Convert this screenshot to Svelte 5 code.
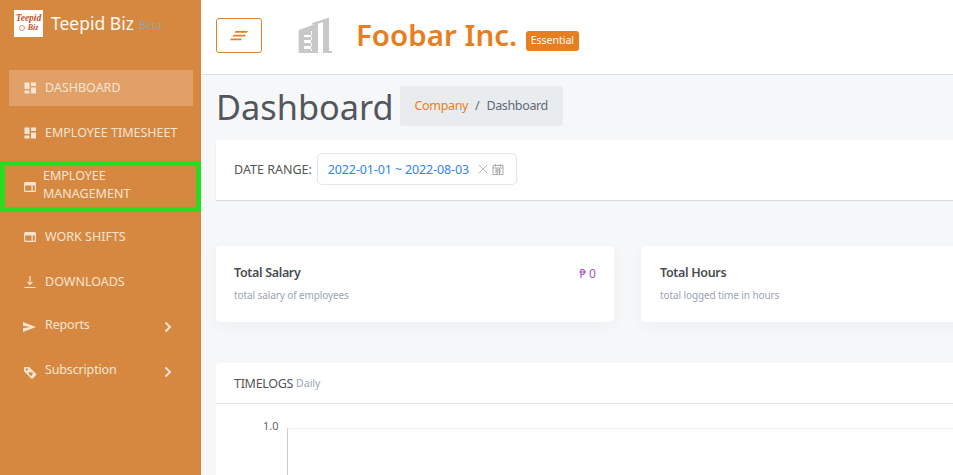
<script>
  const menu = [
    { label: "DASHBOARD", icon: "dash", active: true },
    { label: "EMPLOYEE TIMESHEET", icon: "dash" },
    { label: "EMPLOYEE MANAGEMENT", icon: "card", marked: true },
    { label: "WORK SHIFTS", icon: "card" },
    { label: "DOWNLOADS", icon: "down" },
    { label: "Reports", icon: "send", sub: true },
    { label: "Subscription", icon: "tag", sub: true },
  ];
</script>

<div class="layout">
  <aside class="sidebar">
    <div class="brand">
      <div class="logo">
        <span class="logo-top">Teepid</span>
        <span class="logo-bottom"><i class="dot"></i>Biz</span>
      </div>
      <span class="brand-name">Teepid Biz</span>
      <span class="beta">Beta</span>
    </div>

    <nav>
      {#each menu as item}
        <a href="#top" class="item" class:active={item.active} class:marked={item.marked} class:sub={item.sub}>
          <svg class="icon" viewBox="0 0 14 14" width="14" height="14">
            {#if item.icon === "dash"}
              <path d="M1.500 1.500h5v6.500h-5zM8 1.500h5v3.500h-5zM8 6.500h5v6h-5zM1.500 9.500h5v3h-5z" fill="currentColor" />
            {:else if item.icon === "card"}
              <path fill-rule="evenodd" d="M2.500 2h9a1.500 1.500 0 0 1 1.500 1.500v7a1.500 1.500 0 0 1-1.500 1.500h-9a1.500 1.500 0 0 1-1.500-1.500v-7a1.500 1.500 0 0 1 1.500-1.500zM2.200 5.500v5.300h6.300v-5.300zM9.700 5.500v5.300h2.100v-5.300z" fill="currentColor" />
            {:else if item.icon === "down"}
              <path d="M7 1v8M4.500 6.800l2.500 2.600 2.500-2.600M1.500 12.500h11" fill="none" stroke="currentColor" stroke-width="1.200" />
            {:else if item.icon === "send"}
              <path d="M0 2l13 5-13 5V8.200L7 7 0 5.800z" fill="currentColor" />
            {:else}
              <path fill-rule="evenodd" d="M1 2h5.200l6.800 6.800q.7.700 0 1.400l-3.300 3.300q-.7.700-1.400 0l-7.300-7.300zM3.800 3.300a1.100 1.100 0 1 0 .01 0z" fill="currentColor" />
              <path d="M8.200 11.200L5.900 8.900a1.100 1.100 0 0 1 1.600-1.500l.3.300.3-.3a1.100 1.100 0 0 1 1.500 1.500z" fill="#d68840" />
            {/if}
          </svg>
          <span class="label">{item.label}</span>
          {#if item.sub}
            <svg class="chevron" viewBox="0 0 8 12" width="8" height="12">
              <path d="M1.500 1.500l4.500 4.500-4.500 4.500" fill="none" stroke="currentColor" stroke-width="2" />
            </svg>
          {/if}
        </a>
      {/each}
    </nav>
  </aside>

  <main class="main">
    <header class="topbar">
      <button class="toggle" aria-label="Toggle menu">
        <svg viewBox="0 0 18 10" width="18" height="10">
          <path d="M5.500 0H18l-1 1.800H4.500zM3.500 3.700H16l-1 1.800H2.500zM1 7.500h11l-1 1.800H0z" fill="currentColor" />
        </svg>
      </button>
      <svg class="building" viewBox="0 0 36 36" width="36" height="36">
        <path d="M14 5L30 0h1v33h3v2H25V4.200L15 7z" fill="#c8c8c8" />
        <path fill-rule="evenodd" d="M.7 12L20 5v30H.7zM6 17h8v2H6zM6 22h8v3H6zM6 28h8v3H6zM13 13h1v20h-1z" fill="#c8c8c8" />
      </svg>
      <span class="company">Foobar Inc.</span>
      <span class="plan">Essential</span>
    </header>

    <div class="page-title">
      <h1>Dashboard</h1>
      <div class="crumbs">
        <span class="crumb-link">Company</span>
        <span class="sep">/</span>
        <span>Dashboard</span>
      </div>
    </div>

    <section class="filter">
      <span class="filter-label">DATE RANGE:</span>
      <div class="range">
        <span class="range-value">2022-01-01 ~ 2022-08-03</span>
        <svg viewBox="0 0 10 10" width="10" height="10">
          <path d="M.8.800l8.400 8.400M9.200.800L.8 9.200" fill="none" stroke="#bbb" stroke-width="1" />
        </svg>
        <svg viewBox="0 0 12 12" width="12" height="12">
          <path d="M1 2.500h10v9h-10zM1 5h10M3.500 1v2.500M8.500 1v2.500M3 7h6M3 9h6M5 5v6M7.500 5v6" fill="none" stroke="#aaa" stroke-width="1" />
        </svg>
      </div>
    </section>

    <section class="stats">
      <div class="stat">
        <div class="stat-row">
          <h3>Total Salary</h3>
          <span class="amount">₱ 0</span>
        </div>
        <p>total salary of employees</p>
      </div>
      <div class="stat">
        <div class="stat-row">
          <h3>Total Hours</h3>
        </div>
        <p>total logged time in hours</p>
      </div>
    </section>

    <section class="chart-card">
      <div class="chart-head">
        <span class="chart-title">TIMELOGS</span>
        <span class="chart-sub">Daily</span>
      </div>
      <div class="chart">
        <span class="tick">1.0</span>
        <div class="plot"></div>
      </div>
    </section>
  </main>
</div>

<style>
  :global(body) {
    margin: 0;
    overflow: hidden;
    font-family: "Noto Sans", "Open Sans", sans-serif;
  }

  .layout {
    display: flex;
    height: 475px;
    overflow: hidden;
    background: #f6f7f9;
  }

  .sidebar {
    flex: 0 0 201px;
    background: #d68840;
    color: #fff;
  }

  .brand {
    display: flex;
    align-items: center;
    height: 46px;
    padding-left: 14px;
  }

  .logo {
    width: 29px;
    height: 27px;
    background: #fff;
    display: flex;
    flex-direction: column;
    align-items: center;
    justify-content: center;
    color: #c0522a;
    font-family: "Liberation Serif", serif;
    font-style: italic;
    font-weight: bold;
    line-height: 10px;
  }

  .logo-top {
    font-size: 9.500px;
  }

  .logo-bottom {
    display: flex;
    align-items: center;
    gap: 3px;
    font-size: 8px;
  }

  .dot {
    width: 4px;
    height: 4px;
    border: 1px solid #e09060;
    border-radius: 50%;
  }

  .brand-name {
    margin-left: 8px;
    font-size: 17.500px;
    color: #fdf8f2;
  }

  .beta {
    margin-left: 5px;
    margin-top: 3px;
    font-size: 10.500px;
    color: #98a2a8;
  }

  nav {
    display: flex;
    flex-direction: column;
    padding-top: 24px;
  }

  .item {
    display: flex;
    align-items: center;
    height: 36px;
    margin: 0 8px 9px 9px;
    padding-left: 14px;
    box-sizing: border-box;
    color: #f6e4d2;
    font-size: 12.500px;
    line-height: 18px;
    text-decoration: none;
  }

  .item.active {
    background: #e0a068;
  }

  .item.marked {
    height: 51px;
    margin: 1px 0 7px;
    padding-left: 18px;
    border: 5px solid #2adb21;
  }

  .item.sub {
    letter-spacing: -0.15px;
  }

  .icon {
    flex: none;
    margin-right: 8px;
  }

  .label {
    flex: 1;
  }

  .marked .label {
    margin-left: -2px;
    margin-top: -4px;
    padding-right: 40px;
  }

  .sub .label {
    margin-top: -5px;
  }

  .chevron {
    margin-right: 21px;
    flex: none;
  }

  .main {
    flex: 1;
    min-width: 0;
  }

  .topbar {
    display: flex;
    align-items: center;
    height: 75px;
    padding-left: 15px;
    box-sizing: border-box;
    background: #fff;
    border-bottom: 1px solid #dfe1e5;
  }

  .toggle {
    width: 46px;
    height: 35px;
    display: flex;
    align-items: center;
    justify-content: center;
    padding: 0;
    margin-bottom: 3px;
    background: #fff;
    border: 1px solid #e87e22;
    border-radius: 3px;
    color: #e87e22;
  }

  .building {
    margin: 0 0 3px 36px;
  }

  .company {
    margin-left: 22px;
    margin-bottom: 4px;
    color: #e87e22;
    font-size: 29.500px;
    font-weight: 600;
    line-height: 36px;
  }

  .plan {
    margin: 7px 0 0 9px;
    padding: 0 4.500px;
    height: 20px;
    line-height: 19px;
    border-radius: 3px;
    background: #e87e22;
    color: #fff;
    font-size: 10.500px;
  }

  .page-title {
    display: flex;
    align-items: center;
    height: 65px;
    padding-left: 15px;
  }

  h1 {
    margin: 0 0 3px;
    font-size: 34.300px;
    font-weight: 400;
    color: #53565b;
  }

  .crumbs {
    display: flex;
    align-items: center;
    gap: 7px;
    height: 40px;
    margin: 0 0 4px 6px;
    padding: 0 15px;
    border-radius: 3px;
    background: #e9ecef;
    color: #5f6a75;
    font-size: 12.500px;
    letter-spacing: -0.35px;
  }

  .crumb-link {
    color: #e87e22;
  }

  .filter {
    display: flex;
    align-items: center;
    height: 60px;
    margin-left: 15px;
    padding: 0 0 2px 18px;
    box-sizing: border-box;
    background: #fff;
    box-shadow: 0 1px 1px #dcdde0;
  }

  .filter-label {
    font-size: 12.500px;
    color: #555;
  }

  .range {
    display: flex;
    align-items: center;
    gap: 4px;
    height: 30px;
    margin-left: 5px;
    padding: 0 12px 0 10px;
    border: 1px solid #e1e5ec;
    border-radius: 5px;
  }

  .range-value {
    margin-right: 5px;
    color: #2f86e9;
    font-size: 12.500px;
    letter-spacing: -0.13px;
  }

  .stats {
    display: grid;
    grid-template-columns: 398px 398px;
    gap: 27px;
    margin: 46px 0 0 15px;
  }

  .stat {
    height: 76px;
    padding: 18px;
    box-sizing: border-box;
    border-radius: 4px;
    background: #fff;
    box-shadow: 0 4px 16px rgba(30, 40, 60, 0.04);
  }

  .stat:last-child {
    width: 500px;
    padding-left: 19px;
  }

  .stat-row {
    display: flex;
    justify-content: space-between;
    align-items: center;
  }

  h3 {
    margin: 0;
    font-size: 12.500px;
    font-weight: 600;
    line-height: 18px;
    color: #4a4d52;
    letter-spacing: -0.33px;
  }

  .amount {
    color: #a651c9;
    font-size: 12px;
  }

  p {
    margin: 6px 0 0;
    font-size: 10px;
    line-height: 14px;
    color: #9aa5b5;
    letter-spacing: -0.1px;
  }

  .chart-card {
    margin: 41px 0 0 15px;
    background: #fff;
    border-top-left-radius: 4px;
  }

  .chart-head {
    height: 41px;
    padding-left: 18px;
    box-sizing: border-box;
    display: flex;
    align-items: center;
    gap: 3px;
    border-bottom: 1px solid #e2e3e6;
  }

  .chart-title {
    font-size: 12.500px;
    color: #555;
    letter-spacing: -0.3px;
  }

  .chart-sub {
    font-size: 10.500px;
    color: #9aa5b5;
  }

  .chart {
    display: flex;
    align-items: flex-start;
    height: 72px;
    padding: 16px 0 0 47px;
  }

  .tick {
    width: 24px;
    margin-top: -1px;
    font-size: 11px;
    line-height: 14px;
    color: #666;
  }

  .plot {
    flex: 1;
    margin-top: 8px;
    height: 64px;
    border-left: 1px solid #ccc;
    border-top: 1px solid #eee;
  }
</style>
